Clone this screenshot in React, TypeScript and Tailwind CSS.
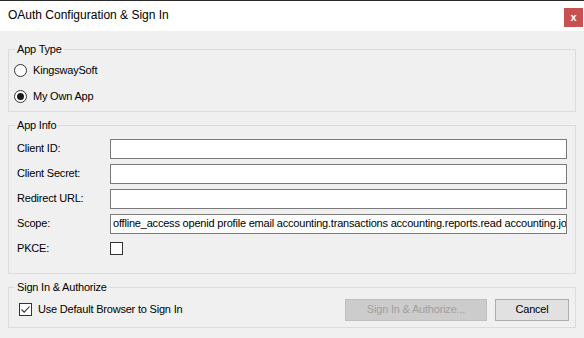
import React from 'react'

const font = { fontFamily: '"Segoe UI", "Liberation Sans", Arial, sans-serif' }

function Radio({ checked, label }: { checked?: boolean; label: string }) {
  return (
    <div className="flex h-[26px] items-center gap-[6px]">
      <span className="flex h-[13px] w-[13px] items-center justify-center rounded-full border border-[#333333] bg-white">
        {checked && <span className="h-[7px] w-[7px] rounded-full bg-[#1a1a1a]" />}
      </span>
      <span>{label}</span>
    </div>
  )
}

function Check({ checked }: { checked?: boolean }) {
  return (
    <span className="flex h-[13px] w-[13px] shrink-0 items-center justify-center border border-[#333333] bg-white">
      {checked && (
        <svg width="11" height="11" viewBox="0 0 11 11" fill="none">
          <path d="M1.5 5.5 L4.2 8.2 L9.5 2.5" stroke="#333333" strokeWidth="1.1" />
        </svg>
      )}
    </span>
  )
}

function Field({ label, value }: { label: string; value?: string }) {
  return (
    <div className="flex h-[25px] items-center">
      <span className="w-[93px] shrink-0">{label}</span>
      <div className="flex h-[20px] min-w-0 flex-1 items-center overflow-hidden whitespace-nowrap border border-[#7a7a7a] bg-white pl-[2px]">
        {value}
      </div>
    </div>
  )
}

function Group({ title, className, children }: { title: string; className: string; children: React.ReactNode }) {
  return (
    <fieldset className={`min-w-0 border border-[#dcdcdc] ${className}`}>
      <legend className="ml-[6px] px-[2px] leading-4">{title}</legend>
      {children}
    </fieldset>
  )
}

export default function App() {
  return (
    <div
      className="h-[338px] w-[584px] overflow-hidden bg-[#f0f0f0] text-[11px] tracking-[-0.2px] text-black"
      style={font}
    >
      {/* title bar */}
      <div className="flex h-[31px] items-start border-t border-[#2b2b2b] bg-white">
        <span className="ml-[8px] mt-[6px] text-[12px] leading-4 tracking-normal">OAuth Configuration &amp; Sign In</span>
        <div className="ml-auto mr-[1px] mt-[7px] flex h-[19px] w-[19px] items-center justify-center bg-[#c75050] text-[11px] font-bold leading-none tracking-normal text-white">
          x
        </div>
      </div>

      <div className="flex flex-col gap-[5px] px-[8px] pt-[10px]">
        <Group title="App Type" className="h-[71px]">
          <div className="pl-[5px]">
            <Radio label="KingswaySoft" />
            <Radio checked label="My Own App" />
          </div>
        </Group>

        <Group title="App Info" className="h-[157px]">
          <div className="pl-[8px] pr-[8px] pt-[3px]">
            <Field label="Client ID:" />
            <Field label="Client Secret:" />
            <Field label="Redirect URL:" />
            <Field
              label="Scope:"
              value="offline_access openid profile email accounting.transactions accounting.reports.read accounting.journals.read accounting.settings"
            />
            <div className="flex h-[25px] items-center">
              <span className="w-[93px] shrink-0">PKCE:</span>
              <Check />
            </div>
          </div>
        </Group>

        <Group title="Sign In & Authorize" className="h-[49px]">
          <div className="flex h-[29px] items-center pl-[10px] pr-[6px]">
            <Check checked />
            <span className="ml-[6px]">Use Default Browser to Sign In</span>
            <button className="ml-auto h-[22px] w-[142px] border border-[#bfbfbf] bg-[#cccccc] text-[#a0a0a0]">
              Sign In &amp; Authorize...
            </button>
            <button className="ml-[8px] h-[22px] w-[74px] border border-[#adadad] bg-[#e1e1e1]">Cancel</button>
          </div>
        </Group>
      </div>
    </div>
  )
}
